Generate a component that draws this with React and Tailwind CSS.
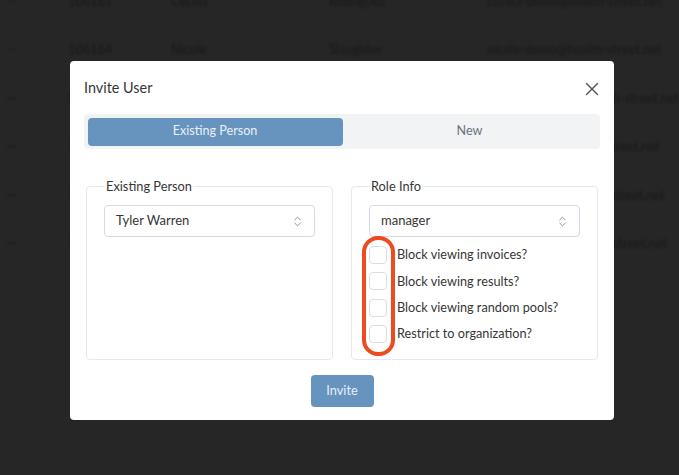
import React from "react";
import { X, ChevronsUpDown } from "lucide-react";

const rows = [
  ["106167", "Cecilia", "Rodriguez", "cecilia-demo@health-street.net"],
  ["106164", "Nicole", "Slaughter", "nicole-demo@health-street.net"],
  ["106160", "Martin", "Gallagher", "martin-rodrigues@health-street.net"],
  ["106158", "Susan", "Perry", "susan-demo@health-street.net"],
  ["106155", "Oliver", "Bennett", "oliver-demos@health-street.net"],
  ["106151", "Jackie", "Nolan", "jackieb-demo@health-street.net"],
];

const checks = [
  "Block viewing invoices?",
  "Block viewing results?",
  "Block viewing random pools?",
  "Restrict to organization?",
];

function SelectBox({ value }) {
  return (
    <div className="flex h-8 items-center justify-between rounded border border-[#d5dae6] bg-white pl-[11px] pr-[10px] text-[13px] text-[#363636]">
      <span>{value}</span>
      <ChevronsUpDown className="h-[13px] w-[13px] text-[#777]" strokeWidth={1.5} />
    </div>
  );
}

function App() {
  return (
    <div className="relative h-[475px] w-[679px] overflow-hidden bg-[#262626] font-['Lato',sans-serif]">
      <div className="-mt-[23px] blur-[0.8px]">
        {rows.map((row) => (
          <div key={row[0]} className="flex h-[48.5px] items-center text-[12.8px] text-[#191919]">
            <span className="w-[68px] pl-[6px]">—</span>
            <span className="w-[103px]">{row[0]}</span>
            <span className="w-[158px]">{row[1]}</span>
            <span className="w-[158px]">{row[2]}</span>
            <span className="whitespace-nowrap">{row[3]}</span>
          </div>
        ))}
      </div>

      <div className="absolute left-[70px] top-[61px] flex h-[359px] w-[544px] flex-col rounded bg-white px-[14px] text-[#363636]">
        <div className="flex h-[53px] items-center justify-between">
          <h2 className="text-[14.4px]">Invite User</h2>
          <X className="mr-[-3px] mt-[2px] h-[22px] w-[22px] text-[#555]" strokeWidth={1.5} />
        </div>

        <div className="flex h-[35px] items-center rounded bg-[#f1f3f5] px-[3.5px] text-[12.6px]">
          <div className="flex h-[28px] w-[255px] items-center justify-center rounded bg-[#6794bf] text-[#e8eff6]">
            Existing Person
          </div>
          <div className="flex flex-1 items-center justify-center text-[#6b7280]">New</div>
        </div>

        <div className="mt-[29px] flex gap-[18px] px-[2px]">
          <fieldset className="h-[182px] w-[247px] rounded border border-[#e6e8ef] px-[17px] pb-0">
            <legend className="ml-[1px] px-[1px] text-[12.8px] leading-[16px]">Existing Person</legend>
            <div className="mt-[11px]">
              <SelectBox value="Tyler Warren" />
            </div>
          </fieldset>
          <fieldset className="h-[182px] w-[247px] rounded border border-[#e6e8ef] px-[17px] pb-0">
            <legend className="ml-[1px] px-[1px] text-[12.8px] leading-[16px]">Role Info</legend>
            <div className="mt-[11px]">
              <SelectBox value="manager" />
            </div>
            <div className="mt-[9px] flex flex-col gap-[8.3px]">
              {checks.map((label) => (
                <label key={label} className="flex h-[18px] items-center gap-[10px] text-[12.7px]">
                  <span className="h-[18px] w-[18px] shrink-0 rounded border border-[#d9dde8] bg-white" />
                  <span className="whitespace-nowrap">{label}</span>
                </label>
              ))}
            </div>
          </fieldset>
        </div>

        <div className="mt-[15px] flex justify-center">
          <button className="h-[32px] w-[63px] rounded bg-[#6794bf] text-[12.8px] text-[#e8eff6]">Invite</button>
        </div>
      </div>

      {/* red annotation round the checkboxes */}
      <div className="absolute left-[362px] top-[236px] h-[120px] w-[33px] rounded-[16px] border-[4px] border-[#ee4a1e]" />
    </div>
  );
}

export default App;
